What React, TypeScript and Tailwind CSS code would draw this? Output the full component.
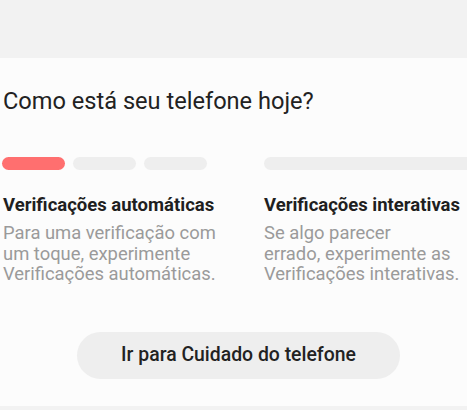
import React from "react";

export default function App() {
  return (
    <div className="w-[467px] h-[410px] bg-[#f2f2f2] overflow-hidden" style={{ fontFamily: "Roboto, 'Noto Sans', sans-serif" }}>
      <div className="h-[58px]" />
      <div className="h-[348px] bg-[#fcfcfc] overflow-hidden">
        <div className="pt-[29px] pl-[3px] text-[23.6px] leading-[28px] text-[#222]">
          Como está seu telefone hoje?
        </div>
        <div className="flex mt-[42px] w-[720px]">
          <div className="w-[264px] pl-[2px] shrink-0">
            <div className="flex gap-[8px]">
              <div className="w-[63px] h-[13px] rounded-full bg-[#ff6f6f]" />
              <div className="w-[63px] h-[13px] rounded-full bg-[#eeeeee]" />
              <div className="w-[63px] h-[13px] rounded-full bg-[#eeeeee]" />
            </div>
            <div className="pl-[1px] mt-[24px] text-[18.5px] leading-[22px] font-bold text-[#1f1f1f] whitespace-nowrap">Verificações automáticas</div>
            <div className="pl-[1px] mt-[7px] text-[18.4px] leading-[20.5px] text-[#9a9a9a] whitespace-nowrap">
              Para uma verificação com
              <br />
              um toque, experimente
              <br />
              Verificações automáticas.
            </div>
          </div>
          <div className="w-[440px] shrink-0">
            <div className="h-[13px] rounded-full bg-[#eeeeee]" />
            <div className="mt-[24px] text-[18.5px] leading-[22px] font-bold text-[#1f1f1f] whitespace-nowrap">Verificações interativas</div>
            <div className="mt-[7px] text-[18.4px] leading-[20.5px] text-[#9a9a9a] whitespace-nowrap">
              Se algo parecer
              <br />
              errado, experimente as
              <br />
              Verificações interativas.
            </div>
          </div>
        </div>
        <div className="flex mt-[47px] pl-[77px]">
          <div className="w-[323px] h-[47px] rounded-full bg-[#eeeeee] flex items-center justify-center text-[19.4px] font-medium text-[#222] whitespace-nowrap">
            Ir para Cuidado do telefone
          </div>
        </div>
      </div>
    </div>
  );
}
